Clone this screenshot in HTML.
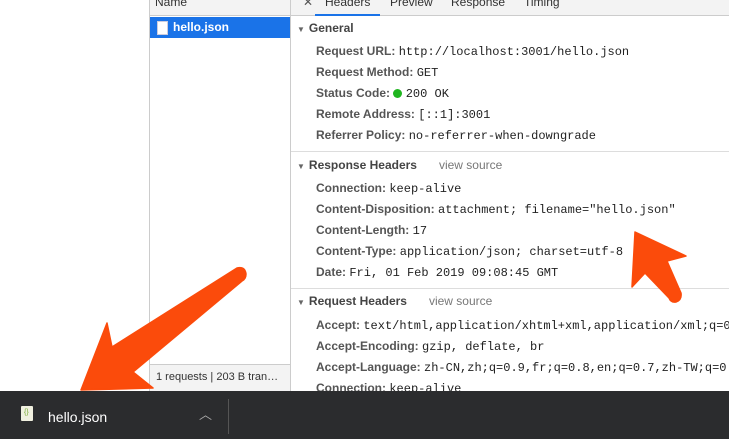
<!DOCTYPE html>
<html><head><style>
body{margin:0;width:729px;height:439px;overflow:hidden;background:#fff;font-family:"Liberation Sans",sans-serif;position:relative}
.a{position:absolute}
.hdr{background:#f3f3f3;border-bottom:1px solid #ccc}
.row{position:absolute;left:316px;font-size:12px;color:#303030;white-space:nowrap}
.row b{color:#555}
.row span{font-family:"Liberation Mono",monospace;font-size:12px;color:#222}
.sec{position:absolute;left:297px;font-size:12px;font-weight:bold;color:#444;white-space:nowrap}
.sec i{font-style:normal;font-size:8px;color:#666;margin-right:4px}
.sec em{font-style:normal;font-weight:normal;color:#777;margin-left:22px}
</style></head><body>
<div class="a" style="left:149px;top:0;width:1px;height:391px;background:#ccc"></div>
<div class="a" style="left:290px;top:0;width:1px;height:391px;background:#ccc"></div>
<div class="a hdr" style="left:150px;top:0;width:140px;height:15px"><div class="a" style="left:5px;top:-5px;font-size:12px;color:#333">Name</div></div>
<div class="a hdr" style="left:291px;top:0;width:438px;height:15px;font-size:12px;color:#333">
<div class="a" style="left:12px;top:-5px;color:#555">✕</div>
<div class="a" style="left:34px;top:-5px">Headers</div>
<div class="a" style="left:24px;top:14px;width:65px;height:2px;background:#1a73e8"></div>
<div class="a" style="left:99px;top:-5px">Preview</div>
<div class="a" style="left:160px;top:-5px">Response</div>
<div class="a" style="left:233px;top:-5px">Timing</div>
</div>
<div class="a" style="left:150px;top:17px;width:140px;height:21px;background:#1a73e8"></div>
<div class="a" style="left:157px;top:21px;width:9px;height:12px;background:#fff;border:1px solid #ccd"></div>
<div class="a" style="left:173px;top:20px;font-size:12px;color:#fff;font-weight:bold">hello.json</div>
<div class="a" style="left:150px;top:364px;width:140px;height:27px;background:#f3f3f3;border-top:1px solid #ccc"></div>
<div class="a" style="left:156px;top:371px;font-size:11px;color:#333">1 requests | 203 B tran…</div>

<div class="sec" style="top:21px"><i>▼</i>General</div>
<div class="row" style="top:44px"><b>Request URL:</b> <span>http://localhost:3001/hello.json</span></div>
<div class="row" style="top:65px"><b>Request Method:</b> <span>GET</span></div>
<div class="row" style="top:86px"><b>Status Code:</b> <span style="display:inline-block;width:9px;height:9px;border-radius:50%;background:#1fb51f;vertical-align:-1px"></span> <span>200 OK</span></div>
<div class="row" style="top:107px"><b>Remote Address:</b> <span>[::1]:3001</span></div>
<div class="row" style="top:128px"><b>Referrer Policy:</b> <span>no-referrer-when-downgrade</span></div>
<div class="a" style="left:291px;top:151px;width:438px;height:1px;background:#ddd"></div>
<div class="sec" style="top:158px"><i>▼</i>Response Headers<em>view source</em></div>
<div class="row" style="top:181px"><b>Connection:</b> <span>keep-alive</span></div>
<div class="row" style="top:202px"><b>Content-Disposition:</b> <span>attachment; filename="hello.json"</span></div>
<div class="row" style="top:223px"><b>Content-Length:</b> <span>17</span></div>
<div class="row" style="top:244px"><b>Content-Type:</b> <span>application/json; charset=utf-8</span></div>
<div class="row" style="top:265px"><b>Date:</b> <span>Fri, 01 Feb 2019 09:08:45 GMT</span></div>
<div class="a" style="left:291px;top:288px;width:438px;height:1px;background:#ddd"></div>
<div class="sec" style="top:294px"><i>▼</i>Request Headers<em>view source</em></div>
<div class="row" style="top:318px"><b>Accept:</b> <span>text/html,application/xhtml+xml,application/xml;q=0.9</span></div>
<div class="row" style="top:339px"><b>Accept-Encoding:</b> <span>gzip, deflate, br</span></div>
<div class="row" style="top:360px"><b>Accept-Language:</b> <span>zh-CN,zh;q=0.9,fr;q=0.8,en;q=0.7,zh-TW;q=0.6</span></div>
<div class="row" style="top:381px"><b>Connection:</b> <span>keep-alive</span></div>

<div class="a" style="left:0;top:391px;width:729px;height:48px;background:#2b2c2e"></div>
<div class="a" style="left:21px;top:406px;width:12px;height:15px;background:#f0f0e0;border-radius:1px"></div>
<div class="a" style="left:24px;top:409px;font-size:7px;color:#7a3">{}</div>
<div class="a" style="left:48px;top:409px;font-size:14px;color:#fff">hello.json</div>
<div class="a" style="left:199px;top:404px;font-size:13px;color:#aaa">︿</div>
<div class="a" style="left:228px;top:399px;width:1px;height:35px;background:#555"></div>

<svg class="a" style="left:0;top:0" width="729" height="439">
<g fill="#fb4b0b" stroke="#fb4b0b" stroke-linejoin="round">
<path d="M81,390 L107,323 L112,347 L237,268 Q245,266 246,274 Q246,279 242,281 L133,372 L153,388 Z" stroke-width="1.5"/>
<path d="M635,232 L686,256 L667,261 L681,293 Q682,300 676,302 Q671,303 669,298 L645,273 L632,287 Z" stroke-width="1.5"/>
</g></svg>
</body></html>
